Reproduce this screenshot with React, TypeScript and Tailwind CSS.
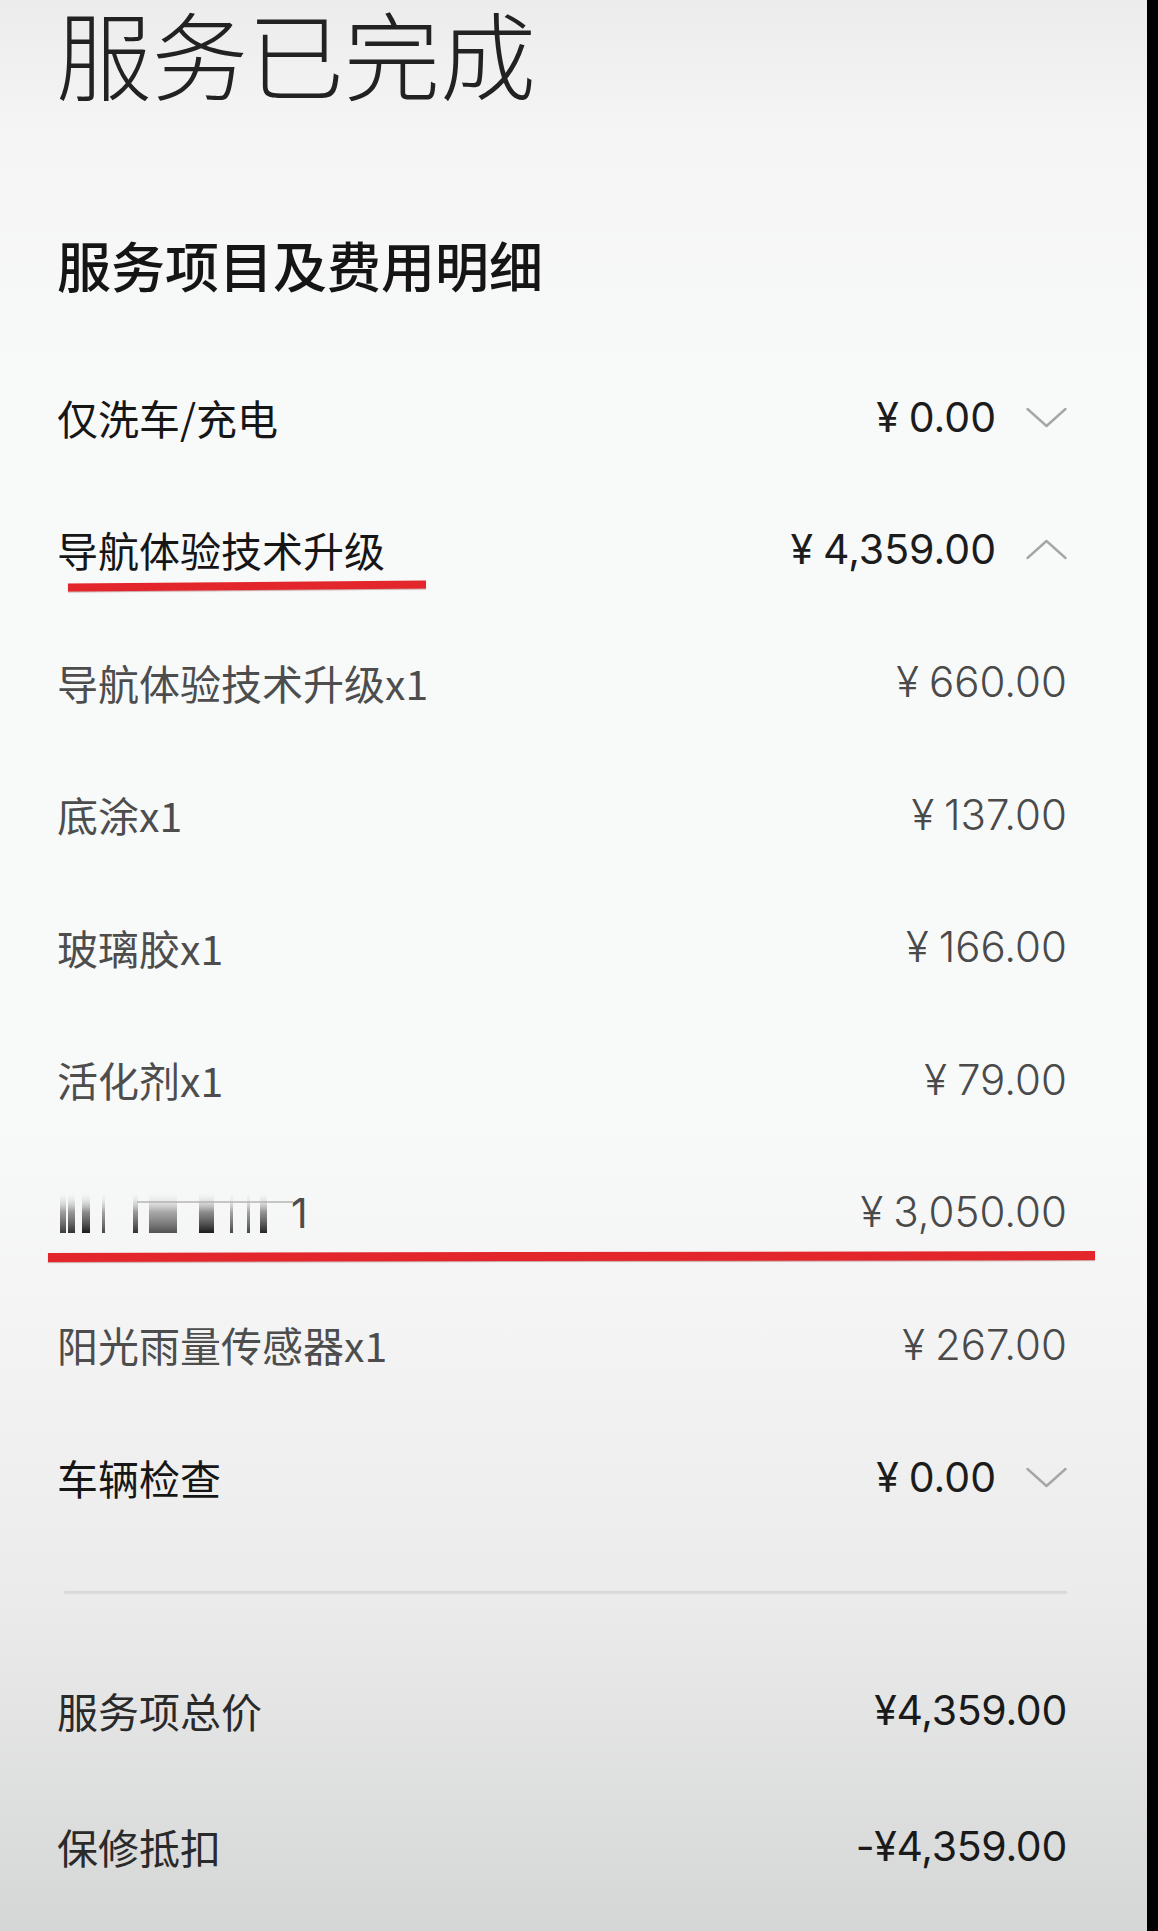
import React from "react";

const CJK = '"Noto Sans CJK SC", "Noto Sans", sans-serif';
const NUM = 'Inter, "Noto Sans CJK SC", sans-serif';

function Chevron({ dir }: { dir: "up" | "down" }) {
  return (
    <svg width="41" height="21" viewBox="0 0 41 21" className="shrink-0">
      <polyline
        points={dir === "down" ? "1.5,2 20.5,19 39.5,2" : "1.5,19 20.5,2 39.5,19"}
        fill="none"
        stroke="#a6a6a6"
        strokeWidth="2.4"
        strokeLinecap="round"
        strokeLinejoin="round"
      />
    </svg>
  );
}

function Yen({ amount, className }: { amount: string; className?: string }) {
  return (
    <span className={className} style={{ fontFamily: NUM }}>
      <span className="mr-[10px]">¥</span>
      {amount}
    </span>
  );
}

function HeaderRow({ label, amount, dir, underline }: { label: string; amount: string; dir: "up" | "down"; underline?: boolean }) {
  return (
    <div className="relative flex h-[132.5px] items-center justify-between">
      <span className="text-[41px] leading-none text-[#161616]">{label}</span>
      <div className="flex items-center gap-[30px]">
        <Yen amount={amount} className="text-[41px] leading-none text-[#1c1c1c]" />
        <Chevron dir={dir} />
      </div>
      {underline && (
        <div className="absolute left-[11px] top-[98px] h-[8px] w-[358px] -rotate-[0.5deg] bg-[#e3262b] shadow-[0_1px_1px_rgba(120,0,0,0.35)]" />
      )}
    </div>
  );
}

function SubRow({ label, amount, children }: { label?: string; amount: string; children?: React.ReactNode }) {
  return (
    <div className="relative flex h-[132.5px] items-center justify-between">
      {children ?? <span className="text-[41px] leading-none text-[#4d4d4d]">{label}</span>}
      <Yen amount={amount} className="text-[42px] font-light leading-none text-[#4a4a4a]" />
    </div>
  );
}

function Redacted() {
  const bars: [number, number, number][] = [
    [3, 6, 0.85],
    [11, 7, 0.9],
    [25, 8, 1],
    [45, 3, 0.8],
    [76, 5, 0.9],
    [92, 28, 0.75],
    [142, 15, 1],
    [173, 3, 0.8],
    [190, 3, 0.8],
    [203, 7, 0.95],
  ];
  return (
    <div className="flex items-end">
      <svg width="236" height="44" viewBox="0 0 236 44">
        <defs>
          <linearGradient id="bg1" x1="0" y1="0" x2="0" y2="1">
            <stop offset="0" stopColor="#ffffff" stopOpacity="0" />
            <stop offset="0.5" stopColor="#6a6a6a" stopOpacity="0.75" />
            <stop offset="1" stopColor="#1a1a1a" stopOpacity="1" />
          </linearGradient>
        </defs>
        <line x1="80" y1="12" x2="236" y2="12" stroke="#8a8a8a" strokeWidth="1.5" opacity="0.6" />
        {bars.map(([x, w, o], i) => (
          <rect key={i} x={x} y={1} width={w} height={42} fill="url(#bg1)" opacity={o} />
        ))}
      </svg>
      <span className="-ml-[2px] text-[41px] leading-none text-[#4d4d4d]" style={{ fontFamily: NUM }}>1</span>
    </div>
  );
}

export default function App() {
  return (
    <div className="flex min-h-[1931px] w-[1158px]" style={{ fontFamily: CJK }}>
      <div className="flex-1 bg-[linear-gradient(to_bottom,#ececec_0%,#f5f5f5_7%,#f8f9f9_20%,#f8f9f9_58%,#f3f3f3_70%,#ebebeb_83%,#d5d6d6_100%)] pl-[57px] pr-[80px]">
        <div className="flex h-[104px] items-center">
          <h1 className="-ml-[1px] text-[96px] font-light leading-[104px] text-[#222]">服务已完成</h1>
        </div>
        <div className="mt-[121px] flex h-[80px] items-center">
          <h2 className="text-[54px] font-medium leading-none text-[#151515]">服务项目及费用明细</h2>
        </div>
        <div className="mt-[46px]">
          <HeaderRow label="仅洗车/充电" amount="0.00" dir="down" />
          <HeaderRow label="导航体验技术升级" amount="4,359.00" dir="up" underline />
          <SubRow label="导航体验技术升级x1" amount="660.00" />
          <SubRow label="底涂x1" amount="137.00" />
          <SubRow label="玻璃胶x1" amount="166.00" />
          <SubRow label="活化剂x1" amount="79.00" />
          <SubRow amount="3,050.00">
            <Redacted />
            <div className="absolute -left-[9px] top-[106px] h-[9px] w-[1047px] -rotate-[0.1deg] bg-[#e3262b] shadow-[0_1px_1px_rgba(120,0,0,0.35)]" />
          </SubRow>
          <SubRow label="阳光雨量传感器x1" amount="267.00" />
          <HeaderRow label="车辆检查" amount="0.00" dir="down" />
        </div>
        <div className="mt-[47px] ml-[7px] h-[2px] bg-[#d9d9d9] shadow-[0_1px_2px_rgba(0,0,0,0.08)]" />
        <div className="mt-[50px]">
          <div className="flex h-[136px] items-center justify-between">
            <span className="text-[41px] leading-none text-[#2a2a2a]">服务项总价</span>
            <span className="text-[41px] leading-none tracking-[-0.3px] text-[#1a1a1a]" style={{ fontFamily: NUM }}>¥4,359.00</span>
          </div>
          <div className="flex h-[136px] items-center justify-between">
            <span className="text-[41px] leading-none text-[#2a2a2a]">保修抵扣</span>
            <span className="text-[41px] leading-none tracking-[-0.3px] text-[#1a1a1a]" style={{ fontFamily: NUM }}>-¥4,359.00</span>
          </div>
        </div>
      </div>
      <div className="w-[11px] shrink-0 bg-black" />
    </div>
  );
}
